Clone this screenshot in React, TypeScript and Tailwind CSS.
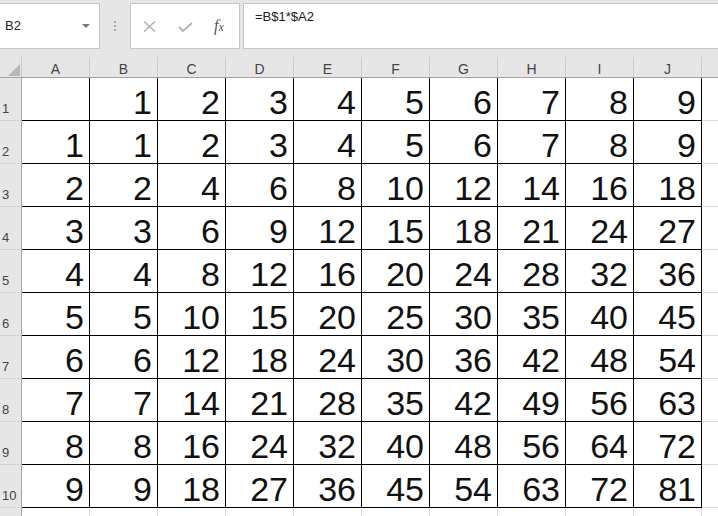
import React from "react";

const cols = ["A", "B", "C", "D", "E", "F", "G", "H", "I", "J"];

const rows: (number | string)[][] = [
  ["", 1, 2, 3, 4, 5, 6, 7, 8, 9],
  ...[1, 2, 3, 4, 5, 6, 7, 8, 9].map((r) => [r, ...[1, 2, 3, 4, 5, 6, 7, 8, 9].map((c) => r * c)]),
];

export default function App() {
  return (
    <div className="w-[718px] h-[516px] overflow-hidden bg-[#e6e6e6] font-['Liberation_Sans',Arial,sans-serif] text-black">
      {/* toolbar */}
      <div className="flex h-[49px] pt-[3px]">
        <div className="w-[100px] h-[46px] shrink-0 bg-white border border-l-0 border-[#c6c6c6] flex items-center justify-between pl-[5px] pr-[9px] text-[13px] text-[#222]">
          <span>B2</span>
          <svg width="8" height="4" viewBox="0 0 8 4">
            <polygon points="0,0 8,0 4,4" fill="#7a7a7a" />
          </svg>
        </div>
        <div className="w-[30px] shrink-0 flex flex-col items-center justify-center gap-[2px] pr-[1px]">
          <span className="w-[2px] h-[2px] bg-[#a8a8a8]" />
          <span className="w-[2px] h-[2px] bg-[#a8a8a8]" />
          <span className="w-[2px] h-[2px] bg-[#a8a8a8]" />
        </div>
        <div className="w-[110px] h-[46px] shrink-0 bg-white border border-[#c6c6c6] flex items-center">
          <svg className="ml-[12px]" width="13" height="11" viewBox="0 0 13 11">
            <path d="M1 0.5 L12 10.5 M12 0.5 L1 10.5" stroke="#b4b4b4" strokeWidth="1.6" fill="none" />
          </svg>
          <svg className="ml-[22px] mt-[2px]" width="15" height="10" viewBox="0 0 15 10">
            <path d="M1 5 L5 9 L14 1" stroke="#b4b4b4" strokeWidth="1.8" fill="none" />
          </svg>
          <span className="ml-[21px] -mt-[1px] font-['Liberation_Serif',serif] italic text-[16px] leading-none text-[#555]">
            f<span className="text-[12px]">x</span>
          </span>
        </div>
        <div className="flex-1 h-[46px] ml-[3px] bg-white border border-r-0 border-[#c6c6c6] pl-[11px] pt-[5px] text-[13px] text-[#222] leading-[16px]">
          =B$1*$A2
        </div>
      </div>

      {/* column header */}
      <div className="flex h-[29px] border-b border-[#a3a3a3]">
        <div className="w-[22px] shrink-0 flex items-end">
          <div className="w-full h-[20px] border-r border-[#c8c8c8] flex items-end justify-end pr-[1px] pb-[1px]">
            <svg width="12" height="12" viewBox="0 0 12 12">
              <polygon points="12,0 12,12 0,12" fill="#b7b7b7" />
            </svg>
          </div>
        </div>
        {cols.map((c) => (
          <div key={c} className="w-[68px] shrink-0 flex items-end">
            <div className="w-full h-[20px] border-r border-[#cbcbcb] flex items-end justify-center pb-[1px] text-[14px] leading-none text-[#444]">
              {c}
            </div>
          </div>
        ))}
        <div className="flex-1" />
      </div>

      {/* data rows */}
      {rows.map((row, ri) => (
        <div key={ri} className="flex h-[43px]">
          <div className="w-[22px] shrink-0 border-r border-b border-r-[#a8a8a8] border-b-[#d2d2d2] flex items-end pl-[2px] pb-[5px] text-[13px] leading-none text-[#444]">
            {ri + 1}
          </div>
          {row.map((v, ci) => (
            <div
              key={ci}
              className="w-[68px] shrink-0 bg-white border-r border-b border-black flex items-end justify-end pr-[5px] pb-px text-[34px] leading-none text-[#111]"
            >
              {v}
            </div>
          ))}
          <div className="flex-1 bg-white border-b border-[#dadada]" />
        </div>
      ))}

      {/* partial row 11 */}
      <div className="flex h-[9px]">
        <div className="w-[22px] shrink-0 border-r border-[#a8a8a8]" />
        {cols.map((c) => (
          <div key={c} className="w-[68px] shrink-0 bg-white border-r border-[#dadada]" />
        ))}
        <div className="flex-1 bg-white" />
      </div>
    </div>
  );
}
